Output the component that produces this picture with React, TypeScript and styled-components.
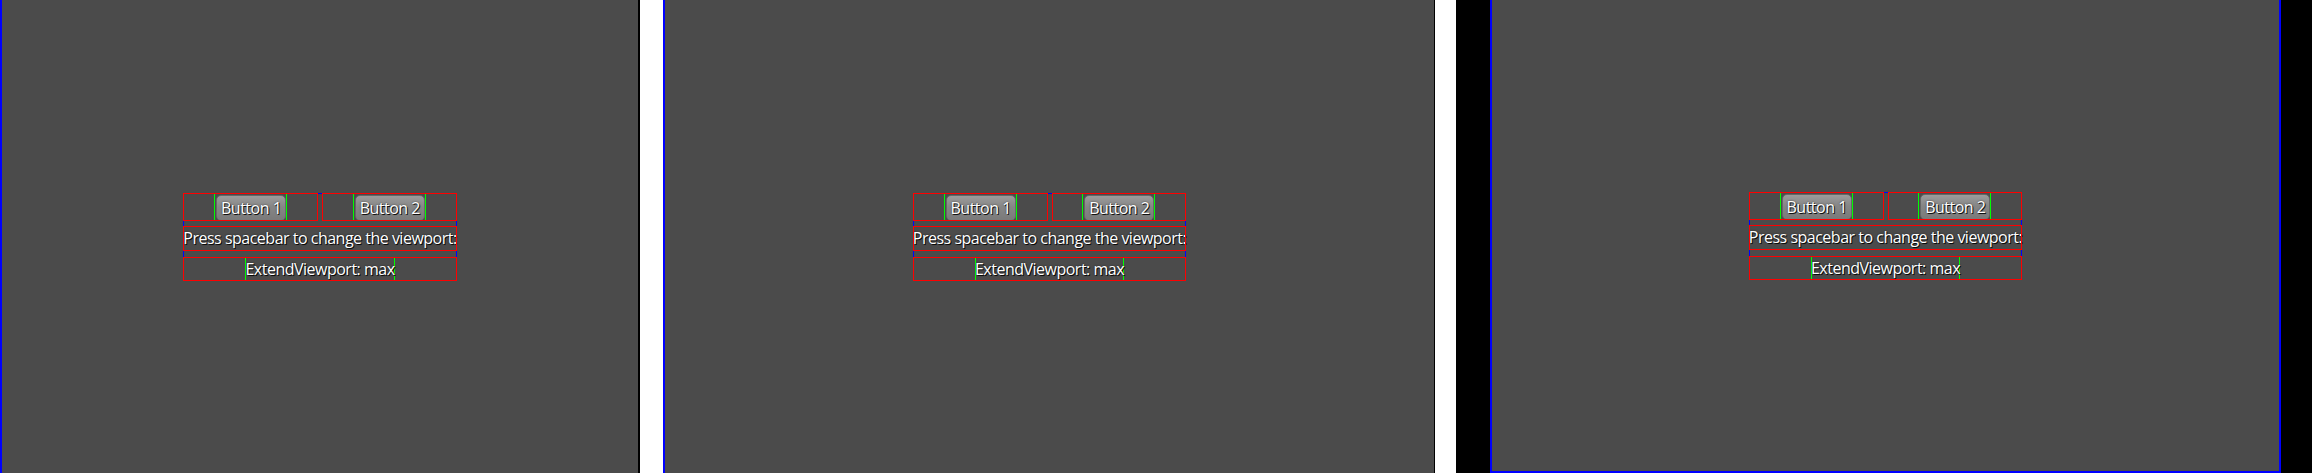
import styled, { createGlobalStyle } from 'styled-components';

const GlobalStyle = createGlobalStyle`
  html, body {
    margin: 0;
    padding: 0;
    background: #ffffff;
  }
  body {
    font-family: "Open Sans", "Noto Sans", "DejaVu Sans", sans-serif;
  }
`;

const Page = styled.div`
  display: flex;
  width: 2312px;
  height: 473px;
  background: #ffffff;
  overflow: hidden;
`;

const Gap = styled.div<{ $w: number }>`
  flex: 0 0 ${({ $w }) => $w}px;
`;

const Viewport = styled.div<{ $w: number; $right: number }>`
  flex: 0 0 ${({ $w }) => $w}px;
  box-sizing: border-box;
  height: 473px;
  display: flex;
  align-items: center;
  justify-content: center;
  background: #4b4b4b;
  border-left: 2px solid #0000ff;
  border-right: ${({ $right }) => $right}px solid #000000;
`;

const Letterbox = styled.div`
  flex: 1;
  height: 473px;
  display: flex;
  background: #000000;
  padding: 0 31px 0 34px;
`;

const FitViewport = styled.div`
  flex: 1;
  box-sizing: border-box;
  display: flex;
  align-items: center;
  justify-content: center;
  background: #4b4b4b;
  border-left: 2px solid #0000ff;
  border-right: 2px solid #0000ff;
  border-bottom: 2px solid #0000ff;
`;

const DebugTable = styled.div`
  display: grid;
  grid-template-columns: 1fr 1fr;
  grid-template-rows: 28px 25px 25px;
  column-gap: 4px;
  row-gap: 5px;
  box-shadow: inset 0 0 0 1px #0000ff;
`;

const Cell = styled.div<{ $span?: boolean; $push?: number }>`
  position: relative;
  display: flex;
  justify-content: center;
  align-items: stretch;
  grid-column: ${({ $span }) => ($span ? '1 / -1' : 'auto')};
  margin-top: ${({ $push }) => $push ?? 0}px;

  &::after {
    content: '';
    position: absolute;
    inset: 0;
    border: 1px solid #ff0000;
    pointer-events: none;
  }
`;

const ButtonWidget = styled.div`
  display: flex;
  padding: 2px 1px 0 2px;
  box-shadow: inset 1px 0 0 #00ff00, inset -1px 0 0 #00ff00;
`;

const ButtonFace = styled.div`
  display: flex;
  align-items: center;
  padding: 0 4px;
  border-radius: 5px;
  border: 1px solid #666666;
  background: linear-gradient(#9c9c9c, #868686 45%, #7a7a7a);
  color: #ffffff;
  font-size: 16px;
  letter-spacing: -0.5px;
  line-height: 22px;
  text-shadow: 1px 1px 0 rgba(0, 0, 0, 0.85), 0 0 2px rgba(0, 0, 0, 0.6);
  white-space: nowrap;
`;

const Label = styled.div`
  box-shadow: inset 1px 0 0 #00ff00, inset -1px 0 0 #00ff00;
  color: #ffffff;
  font-size: 16px;
  letter-spacing: -0.5px;
  line-height: 25px;
  text-shadow: 1px 1px 0 rgba(0, 0, 0, 0.85), 0 0 2px rgba(0, 0, 0, 0.6);
  white-space: nowrap;
`;

const StageUI = ({ mode }: { mode: string }) => (
  <DebugTable>
    <Cell>
      <ButtonWidget>
        <ButtonFace>Button 1</ButtonFace>
      </ButtonWidget>
    </Cell>
    <Cell>
      <ButtonWidget>
        <ButtonFace>Button 2</ButtonFace>
      </ButtonWidget>
    </Cell>
    <Cell $span>
      <Label>Press spacebar to change the viewport:</Label>
    </Cell>
    <Cell $span $push={1}>
      <Label>{mode}</Label>
    </Cell>
  </DebugTable>
);

export default function App() {
  return (
    <>
      <GlobalStyle />
      <Page>
        <Viewport $w={640} $right={2}>
          <StageUI mode="ExtendViewport: max" />
        </Viewport>
        <Gap $w={23} />
        <Viewport $w={772} $right={1}>
          <StageUI mode="ExtendViewport: max" />
        </Viewport>
        <Gap $w={21} />
        <Letterbox>
          <FitViewport>
            <StageUI mode="ExtendViewport: max" />
          </FitViewport>
        </Letterbox>
      </Page>
    </>
  );
}
